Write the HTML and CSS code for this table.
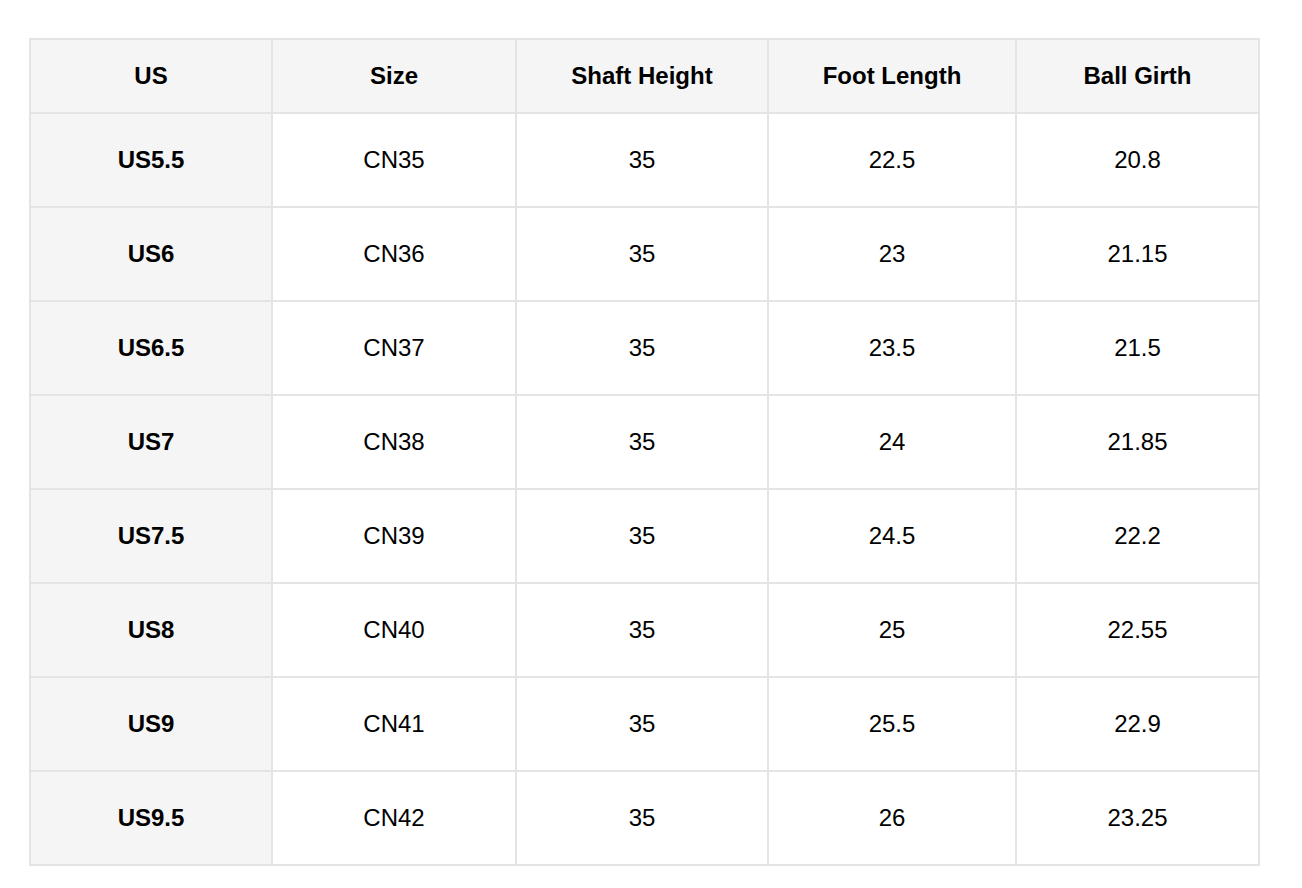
FILE: index.html
```html
<!DOCTYPE html>
<html>
<head>
<meta charset="utf-8">
<link rel="stylesheet" href="styles.css">
</head>
<body>
<table class="size-table">
  <colgroup>
    <col class="c1"><col class="c2"><col class="c3"><col class="c4"><col class="c5">
  </colgroup>
  <thead>
    <tr><th>US</th><th>Size</th><th>Shaft Height</th><th>Foot Length</th><th>Ball Girth</th></tr>
  </thead>
  <tbody>
    <tr><th>US5.5</th><td>CN35</td><td>35</td><td>22.5</td><td>20.8</td></tr>
    <tr><th>US6</th><td>CN36</td><td>35</td><td>23</td><td>21.15</td></tr>
    <tr><th>US6.5</th><td>CN37</td><td>35</td><td>23.5</td><td>21.5</td></tr>
    <tr><th>US7</th><td>CN38</td><td>35</td><td>24</td><td>21.85</td></tr>
    <tr><th>US7.5</th><td>CN39</td><td>35</td><td>24.5</td><td>22.2</td></tr>
    <tr><th>US8</th><td>CN40</td><td>35</td><td>25</td><td>22.55</td></tr>
    <tr><th>US9</th><td>CN41</td><td>35</td><td>25.5</td><td>22.9</td></tr>
    <tr><th>US9.5</th><td>CN42</td><td>35</td><td>26</td><td>23.25</td></tr>
  </tbody>
</table>
</body>
</html>
```
FILE: styles.css
```css
html, body {
  margin: 0;
  padding: 0;
  background: #ffffff;
}
body {
  font-family: "Liberation Sans", Arial, Helvetica, sans-serif;
  color: #000000;
}
.size-table {
  margin: 38px 0 0 29px;
  border-collapse: separate;
  border-spacing: 0;
  table-layout: fixed;
  width: 1231px;
  border-top: 2px solid #e4e4e4;
  border-left: 2px solid #e4e4e4;
}
.c1 { width: 242px; }
.c2 { width: 244px; }
.c3 { width: 252px; }
.c4 { width: 248px; }
.c5 { width: 243px; }
.size-table th,
.size-table td {
  padding: 0;
  text-align: center;
  vertical-align: middle;
  font-size: 24px;
  border-right: 2px solid #e4e4e4;
  border-bottom: 2px solid #e4e4e4;
}
.size-table th {
  font-weight: bold;
  background: #f5f5f5;
}
.size-table td {
  font-weight: normal;
  background: #ffffff;
}
.size-table thead tr { height: 74px; }
.size-table tbody tr { height: 94px; }
```
